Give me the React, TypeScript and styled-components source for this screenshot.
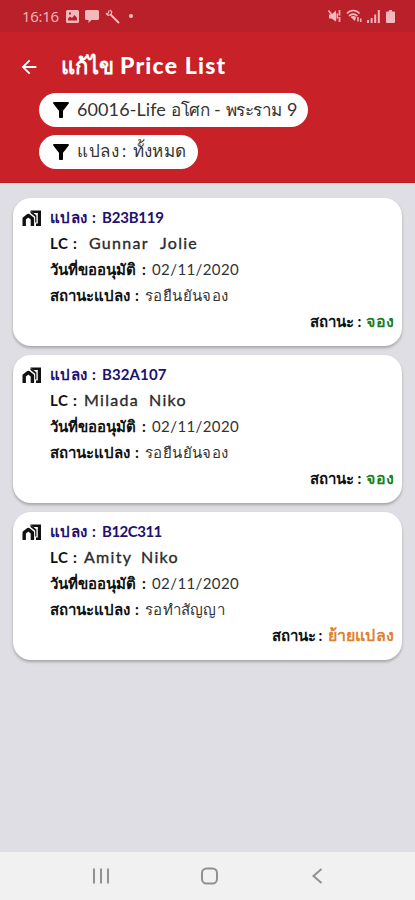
import React from 'react';
import styled, { createGlobalStyle } from 'styled-components';
import { MdArrowBack, MdFilterAlt } from 'react-icons/md';

const GlobalStyle = createGlobalStyle`
  *, *::before, *::after { box-sizing: border-box; }
  html, body { margin: 0; padding: 0; background: #dfdee4; }
  body { font-family: Lato, "Noto Sans", sans-serif; }
`;

const Screen = styled.div`
  width: 415px;
  height: 900px;
  display: flex;
  flex-direction: column;
  overflow: hidden;
  background: #dfdee4;
`;

const StatusBar = styled.div`
  flex: 0 0 32px;
  display: flex;
  align-items: center;
  justify-content: space-between;
  padding: 0 19px 0 22px;
  background: #b9202a;
  color: #f3b9ba;
`;

const StatusGroup = styled.div<{ $gap: number }>`
  display: flex;
  align-items: center;
  gap: ${(p) => p.$gap}px;
`;

const Clock = styled.span`
  width: 38px;
  font-family: "Open Sans", sans-serif;
  font-size: 15px;
  line-height: 32px;
  letter-spacing: -0.3px;
`;

const Dot = styled.span`
  width: 4px;
  height: 4px;
  margin-left: 3px;
  border-radius: 50%;
  background: #f3c4c4;
`;

const Header = styled.header`
  flex: 0 0 151px;
  background: #c82128;
  border-bottom: 1px solid #b51d25;
`;

const TitleRow = styled.div`
  height: 61px;
  display: flex;
  align-items: center;
  padding: 6px 0 0 18px;
  color: #fff;

  svg { margin-top: 2px; }
`;

const Title = styled.h1`
  display: flex;
  align-items: baseline;
  margin: 0 0 0 21px;
  line-height: 34px;
`;

const Run = styled.span<{ $size: number; $w?: number; $track?: number; $weight?: number; $color?: string; $thick?: boolean }>`
  flex: none;
  width: ${(p) => (p.$w ? `${p.$w}px` : 'auto')};
  font-size: ${(p) => p.$size}px;
  font-weight: ${(p) => p.$weight ?? 400};
  letter-spacing: ${(p) => p.$track ?? 0}px;
  color: ${(p) => p.$color ?? 'inherit'};
  -webkit-text-stroke: ${(p) => (p.$thick ? '0.35px currentColor' : '0')};
  white-space: pre;
`;

const Filters = styled.div`
  display: flex;
  flex-direction: column;
  gap: 8px;
  padding-left: 39px;
`;

const Pill = styled.div<{ $w: number }>`
  width: ${(p) => p.$w}px;
  height: 34px;
  display: flex;
  align-items: center;
  gap: 4px;
  padding-left: 10px;
  border-radius: 17px;
  background: #fff;
  color: #333;

  svg { flex: none; color: #000; }
`;

const PillText = styled.div`
  display: flex;
  align-items: baseline;
  line-height: 30px;
  height: 32px;
`;

const List = styled.main`
  flex: 1;
  display: flex;
  flex-direction: column;
  gap: 9px;
  padding: 15px 13px 0;
`;

const Card = styled.article`
  flex: 0 0 148px;
  display: grid;
  grid-template-columns: 20px 1fr;
  column-gap: 8px;
  padding: 6px 8px 0 9px;
  border-radius: 18px;
  background: #fff;
  box-shadow: 0 2px 3px rgba(0, 0, 0, 0.26);

  & > svg { margin-top: 6px; }
`;

const Lines = styled.div`
  display: flex;
  flex-direction: column;
`;

const Line = styled.div<{ $end?: boolean }>`
  height: 26px;
  display: flex;
  align-items: baseline;
  justify-content: ${(p) => (p.$end ? 'flex-end' : 'flex-start')};
  line-height: 26px;
  color: #111;
`;

const NavBar = styled.nav`
  flex: 0 0 48px;
  display: flex;
  align-items: center;
  justify-content: space-between;
  padding: 0 89px 0 91px;
  background: #f1f1f1;
`;

type Plot = {
  code: string;
  codeTrack: number;
  name: [string, string];
  nameOffset: number;
  firstWidth: number;
  progress: string;
  progressTrack: number;
  status: string;
  statusColor: string;
};

const plots: Plot[] = [
  { code: 'B23B119', codeTrack: -0.2, name: ['Gunnar', 'Jolie'], nameOffset: 39, firstWidth: 71, progress: 'รอยืนยันจอง', progressTrack: 0.4, status: 'จอง', statusColor: '#1c7f1f' },
  { code: 'B32A107', codeTrack: 0.1, name: ['Milada', 'Niko'], nameOffset: 34, firstWidth: 65, progress: 'รอยืนยันจอง', progressTrack: 0.4, status: 'จอง', statusColor: '#1c7f1f' },
  { code: 'B12C311', codeTrack: -0.5, name: ['Amity', 'Niko'], nameOffset: 34, firstWidth: 57, progress: 'รอทำสัญญา', progressTrack: 0.3, status: 'ย้ายแปลง', statusColor: '#e0822f' },
];

const navy = '#21106f';

function HomeIcon() {
  return (
    <svg width="20" height="17" viewBox="0 0 20 17" fill="none" stroke="#111">
      <path strokeWidth="3.4" strokeLinejoin="round" d="M2.2 16V8.6l4.1-3.2 4.1 3.2V16" />
      <path fill="#111" stroke="none" d="M8.5 0.500H19V16h-5v-2.400h1.800V3H11.500z" />
      <path fill="#111" stroke="none" d="M8.500 0.500L14.400 5.500V12.500H13.200V6.800L8.500 3z" />
    </svg>
  );
}

function PlotCard({ plot }: { plot: Plot }) {
  return (
    <Card>
      <HomeIcon />
      <Lines>
        <Line>
          <Run $size={15} $w={42} $weight={700} $color={navy} $track={0.4}>แปลง</Run>
          <Run $size={15} $w={10} $weight={700} $color={navy}>:</Run>
          <Run $size={15} $weight={700} $color={navy} $track={plot.codeTrack}>{plot.code}</Run>
        </Line>
        <Line>
          <Run $size={15} $w={23} $weight={700} $track={0.5}>LC</Run>
          <Run $size={15} $w={plot.nameOffset - 23} $weight={700}>:</Run>
          <Run $size={16} $w={plot.firstWidth} $track={1.3} $color="#2b2b2b" $thick>{plot.name[0]}</Run>
          <Run $size={16} $track={1.3} $color="#2b2b2b" $thick>{plot.name[1]}</Run>
        </Line>
        <Line>
          <Run $size={15} $w={92} $weight={700}>วันที่ขออนุมัติ</Run>
          <Run $size={15} $w={10} $weight={700}>:</Run>
          <Run $size={15} $track={0.4} $color="#333">02/11/2020</Run>
        </Line>
        <Line>
          <Run $size={15} $w={85} $weight={700}>สถานะแปลง</Run>
          <Run $size={15} $w={10} $weight={700}>:</Run>
          <Run $size={15} $track={plot.progressTrack} $color="#333">{plot.progress}</Run>
        </Line>
        <Line $end>
          <Run $size={15} $w={47} $weight={700}>สถานะ</Run>
          <Run $size={15} $w={9} $weight={700}>:</Run>
          <Run $size={16} $weight={700} $track={0.2} $color={plot.statusColor}>{plot.status}</Run>
        </Line>
      </Lines>
    </Card>
  );
}

export default function App() {
  return (
    <Screen>
      <GlobalStyle />
      <StatusBar>
        <StatusGroup $gap={6}>
          <Clock>16:16</Clock>
          <svg width="13" height="13" viewBox="0 0 13 13">
            <path fill="currentColor" fillRule="evenodd" d="M1.5 0h10A1.5 1.5 0 0 1 13 1.5v10a1.5 1.5 0 0 1-1.5 1.5h-10A1.5 1.5 0 0 1 0 11.5v-10A1.5 1.5 0 0 1 1.5 0zM2 10.5h9V8L8.5 5 6 8 4 6.5 2 8.5zM3 2.5v2h2v-2z" />
          </svg>
          <svg width="14" height="13" viewBox="0 0 14 13">
            <path fill="currentColor" d="M1.5 0h11A1.5 1.5 0 0 1 14 1.5v7A1.5 1.5 0 0 1 12.5 10H6.5L3.5 13v-3h-2A1.5 1.5 0 0 1 0 8.5v-7A1.5 1.5 0 0 1 1.5 0z" />
          </svg>
          <svg width="15" height="15" viewBox="0 0 15 15" fill="none" stroke="currentColor">
            <path strokeWidth="1.2" d="M1 4.5l2 1.8 3-.8.8-2.7L5 1M1 4.5L3.5 4 4 1.5" />
            <path strokeWidth="2" strokeLinecap="round" d="M6 6l7.5 7.5" />
          </svg>
          <Dot />
        </StatusGroup>
        <StatusGroup $gap={5}>
          <svg width="14" height="14" viewBox="0 0 14 14" fill="none" stroke="currentColor">
            <path fill="currentColor" stroke="none" d="M2 5.5h2.500L9 1.5v11L4.5 9.5H2z" />
            <path strokeWidth="1.7" d="M1.500 1.5l7.500 10" />
            <path strokeWidth="1.7" d="M12.5 1v5.5M12.5 8v5M10.300 4.500v5" />
          </svg>
          <svg width="16" height="14" viewBox="0 0 16 14" fill="none" stroke="currentColor">
            <path strokeWidth="1.7" d="M1 4.5c3.5-4 9-4 12.5 0M3 7c2.400-2.600 6-2.600 8.300 0" />
            <path fill="currentColor" stroke="none" d="M4.5 8c1.500-1.500 4-1.500 5.500 0l-1 4z" />
            <path strokeWidth="1.5" d="M12 8v4.500M14.700 9.500V13" />
          </svg>
          <svg width="13" height="13" viewBox="0 0 13 13" fill="currentColor">
            <path d="M0 10h2v3H0zM3.600 8h2v5h-2zM7.200 4.500h2V13h-2zM10.800 0h2v13h-2z" />
          </svg>
          <svg width="11" height="13" viewBox="0 0 11 13" fill="currentColor">
            <path d="M4 0h3v1.500h2A1 1 0 0 1 10 2.500V12a1 1 0 0 1-1 1H2a1 1 0 0 1-1-1V2.500a1 1 0 0 1 1-1h2z" />
          </svg>
        </StatusGroup>
      </StatusBar>
      <Header>
        <TitleRow>
          <MdArrowBack size={22} />
          <Title>
            <Run $size={22} $w={59} $weight={700}>แก้ไข</Run>
            <Run $size={23} $weight={900} $track={1.2}>Price List</Run>
          </Title>
        </TitleRow>
        <Filters>
          <Pill $w={269}>
            <MdFilterAlt size={24} />
            <PillText>
              <Run $size={18} $w={94} $track={0.1}>60016-Life</Run>
              <Run $size={17} $w={43} $track={-0.5}>อโศก</Run>
              <Run $size={18} $w={12}>-</Run>
              <Run $size={17} $w={61} $track={-0.6}>พระราม</Run>
              <Run $size={18}>9</Run>
            </PillText>
          </Pill>
          <Pill $w={159}>
            <MdFilterAlt size={24} />
            <PillText>
              <Run $size={17} $w={45} $track={0.5}>แปลง</Run>
              <Run $size={17} $w={11}>:</Run>
              <Run $size={17} $track={0.2}>ทั้งหมด</Run>
            </PillText>
          </Pill>
        </Filters>
      </Header>
      <List>
        {plots.map((plot) => (
          <PlotCard key={plot.code} plot={plot} />
        ))}
      </List>
      <NavBar>
        <svg width="20" height="18" viewBox="0 0 20 18" stroke="#919191" strokeWidth="2">
          <path d="M3 1.5v15M10 1.5v15M17 1.5v15" />
        </svg>
        <svg width="18" height="18" viewBox="0 0 18 18" fill="none" stroke="#919191" strokeWidth="2">
          <rect x="1" y="1.5" width="15" height="15" rx="4.500" />
        </svg>
        <svg width="18" height="18" viewBox="0 0 18 18" fill="none" stroke="#919191" strokeWidth="2">
          <path d="M13.500 2l-8 7 8 7" />
        </svg>
      </NavBar>
    </Screen>
  );
}
